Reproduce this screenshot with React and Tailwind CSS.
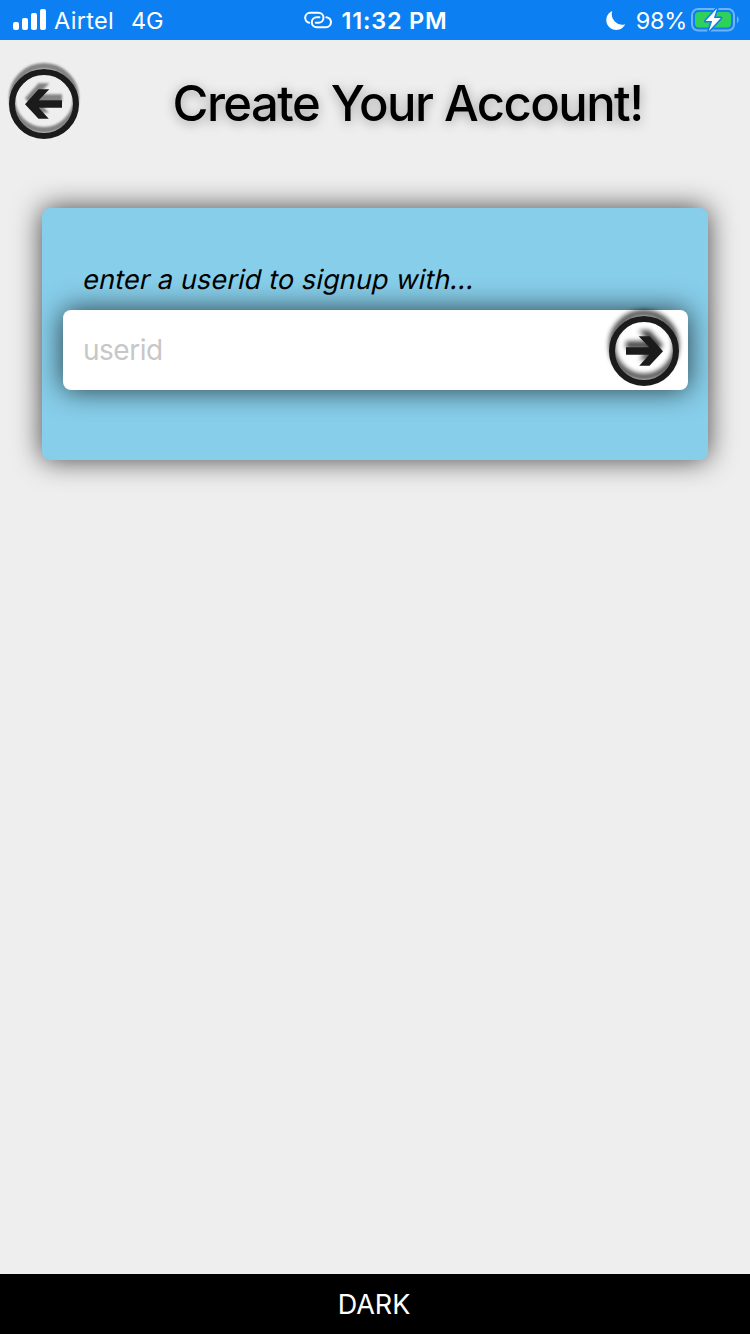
import React from "react";

function ArrowButton({ label, flip, shadow }) {
  return (
    <button type="button" aria-label={label} className="block h-[84px] w-[84px] shrink-0">
      <svg
        viewBox="0 0 84 84"
        className={shadow}
        width="84"
        height="84"
        fill="none"
      >
        <g transform={flip ? "translate(84 0) scale(-1 1)" : undefined}>
          <circle cx="42" cy="42" r="32" stroke="#1b1b1b" strokeWidth="6" />
          <path
            d="M23 42.2 L36.5 27.3 H47.3 L36.8 38.2 H60 V45.8 H36.8 L46.8 56.8 H36.5 Z"
            fill="#1b1b1b"
          />
        </g>
      </svg>
    </button>
  );
}

function StatusBar() {
  return (
    <header className="grid h-10 w-full grid-cols-3 items-center bg-[#0c7ff2] text-[23.5px] leading-[42px] text-white">
      <div className="flex h-10 items-center whitespace-nowrap pl-[13px]">
        <svg width="34" height="40" viewBox="0 0 34 40" fill="#fff">
          <rect x="0" y="22" width="6" height="8" rx="2" />
          <rect x="9" y="18" width="6" height="12" rx="2" />
          <rect x="18" y="13" width="6" height="17" rx="2" />
          <rect x="27" y="9" width="6" height="21" rx="2" />
        </svg>
        <span className="ml-[7px] pt-0.5 tracking-[0.3px]">Airtel</span>
        <span className="ml-[17px] pt-0.5">4G</span>
      </div>
      <div className="flex h-10 items-center justify-center whitespace-nowrap pl-0.5">
        <svg width="28" height="40" viewBox="0 0 28 40" fill="none" stroke="#fff" strokeWidth="2" strokeLinecap="round">
          <path d="M5.2 22.7 A5 5 0 0 1 6 12.8 H14.5 A5 5 0 0 1 14.5 22.8 H11.8" />
          <path d="M22.4 17.2 A5 5 0 0 1 21.5 27.2 H12.8 A5 5 0 0 1 12.8 17.2 H15.4" />
        </svg>
        <span className="ml-[9px] pt-0.5 font-semibold tracking-[0.8px]">11:32 PM</span>
      </div>
      <div className="flex h-10 items-center justify-end whitespace-nowrap pr-[10px]">
        <svg width="20" height="40" viewBox="0 0 20 40" fill="#fff">
          <path d="M6.3 11 A9.9 9.9 0 1 0 19.2 24.2 A10.4 10.4 0 0 1 6.3 11 Z" />
        </svg>
        <span className="ml-[10px] pt-0.5 tracking-[-0.3px]">98%</span>
        <svg className="ml-1" width="49" height="40" viewBox="0 0 49 40" fill="none">
          <rect x="1" y="9" width="42" height="21.5" rx="6" stroke="#72b3f7" strokeWidth="2" />
          <path d="M46 16 Q49.6 19.7 46 23.5 Z" fill="#72b3f7" />
          <rect x="4" y="12" width="36" height="15.5" rx="4" fill="#30d158" />
          <path
            d="M26 8.5 L14.5 21 H21.2 L17.8 31 L29.8 18 H22.9 Z"
            fill="#fff"
            stroke="#0c7ff2"
            strokeWidth="3.2"
            paintOrder="stroke"
            strokeLinejoin="round"
          />
        </svg>
      </div>
    </header>
  );
}

export default function App() {
  return (
    <div className="flex h-[1334px] w-[750px] flex-col overflow-hidden bg-[#eeeeee] font-['Inter','Liberation_Sans',sans-serif] text-black">
      <StatusBar />
      <div className="flex h-[128px] shrink-0 items-center pl-[2px]">
        <ArrowButton label="Back" shadow="drop-shadow-[0_-6px_1.2px_rgba(0,0,0,0.45)]" />
        <h1 className="ml-[86.5px] whitespace-nowrap text-[49px] font-medium leading-[60px] tracking-[-1.55px] [text-shadow:0_2px_12px_rgba(0,0,0,0.35)]">
          Create Your Account!
        </h1>
      </div>
      <main className="flex-1 px-[42px] pt-10">
        <section className="flex h-[252px] flex-col rounded-[8px] bg-[#87ceea] px-[21px] pt-[52px] shadow-[0_0_28px_rgba(0,0,0,0.72)]">
          <label htmlFor="userid" className="block h-[50px] origin-[0_28px] -skew-x-[12deg] whitespace-nowrap pl-[19px] text-[27px] leading-[40px] tracking-[0.15px]">
            enter a userid to signup with...
          </label>
          <div className="flex h-20 w-[625px] items-center rounded-[8px] bg-white pl-5 pr-[2px] shadow-[0_0_28px_rgba(0,0,0,0.72)]">
            <input
              id="userid"
              placeholder="userid"
              className="min-w-0 flex-1 bg-transparent text-[28px] leading-10 tracking-[-0.5px] outline-none placeholder:text-[#c7c7c7]"
            />
            <div className="pt-0.5">
              <ArrowButton label="Continue" flip shadow="drop-shadow-[0_-6px_2.5px_rgba(0,0,0,0.75)]" />
            </div>
          </div>
        </section>
      </main>
      <button type="button" className="h-[60px] w-full shrink-0 bg-black pr-0.5 text-center text-[27px] leading-[62px] text-white">
        DARK
      </button>
    </div>
  );
}
